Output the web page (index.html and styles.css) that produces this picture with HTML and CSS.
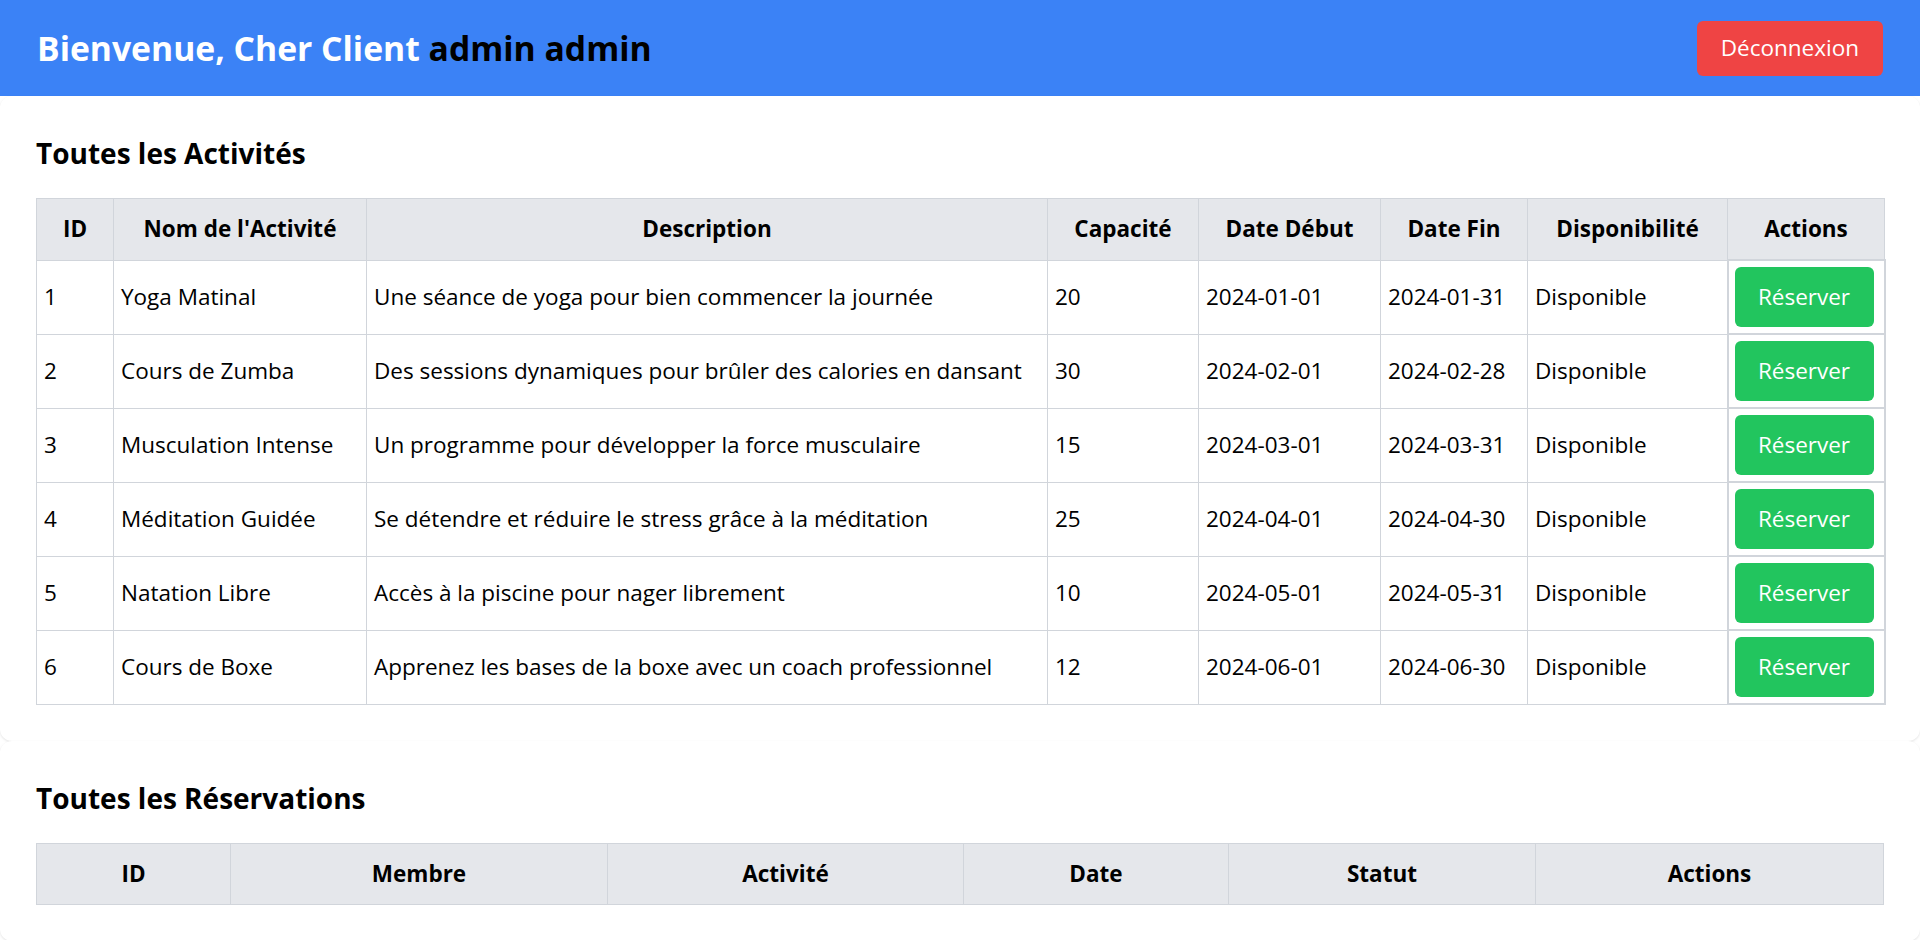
FILE: index.html
```html
<!DOCTYPE html>
<html lang="fr">
<head>
<meta charset="utf-8">
<title>Espace Client</title>
<link rel="stylesheet" href="styles.css">
</head>
<body>
<header class="topbar">
  <h1 class="welcome">Bienvenue, Cher Client <span class="user">admin admin</span></h1>
  <button class="btn btn-logout">Déconnexion</button>
</header>

<main>
  <section class="card">
    <h2 class="section-title">Toutes les Activités</h2>
    <table class="data">
      <colgroup>
        <col class="a1"><col class="a2"><col class="a3"><col class="a4"><col class="a5"><col class="a6"><col class="a7"><col class="a8">
      </colgroup>
      <thead>
        <tr>
          <th>ID</th><th>Nom de l'Activité</th><th>Description</th><th>Capacité</th><th>Date Début</th><th>Date Fin</th><th>Disponibilité</th><th>Actions</th>
        </tr>
      </thead>
      <tbody>
        <tr><td>1</td><td>Yoga Matinal</td><td>Une séance de yoga pour bien commencer la journée</td><td>20</td><td>2024-01-01</td><td>2024-01-31</td><td>Disponible</td><td class="actions"><button class="btn btn-book">Réserver</button></td></tr>
        <tr><td>2</td><td>Cours de Zumba</td><td>Des sessions dynamiques pour brûler des calories en dansant</td><td>30</td><td>2024-02-01</td><td>2024-02-28</td><td>Disponible</td><td class="actions"><button class="btn btn-book">Réserver</button></td></tr>
        <tr><td>3</td><td>Musculation Intense</td><td>Un programme pour développer la force musculaire</td><td>15</td><td>2024-03-01</td><td>2024-03-31</td><td>Disponible</td><td class="actions"><button class="btn btn-book">Réserver</button></td></tr>
        <tr><td>4</td><td>Méditation Guidée</td><td>Se détendre et réduire le stress grâce à la méditation</td><td>25</td><td>2024-04-01</td><td>2024-04-30</td><td>Disponible</td><td class="actions"><button class="btn btn-book">Réserver</button></td></tr>
        <tr><td>5</td><td>Natation Libre</td><td>Accès à la piscine pour nager librement</td><td>10</td><td>2024-05-01</td><td>2024-05-31</td><td>Disponible</td><td class="actions"><button class="btn btn-book">Réserver</button></td></tr>
        <tr><td>6</td><td>Cours de Boxe</td><td>Apprenez les bases de la boxe avec un coach professionnel</td><td>12</td><td>2024-06-01</td><td>2024-06-30</td><td>Disponible</td><td class="actions"><button class="btn btn-book">Réserver</button></td></tr>
      </tbody>
    </table>
  </section>

  <section class="card">
    <h2 class="section-title">Toutes les Réservations</h2>
    <table class="data">
      <colgroup>
        <col class="r1"><col class="r2"><col class="r3"><col class="r4"><col class="r5"><col class="r6">
      </colgroup>
      <thead>
        <tr><th>ID</th><th>Membre</th><th>Activité</th><th>Date</th><th>Statut</th><th>Actions</th></tr>
      </thead>
      <tbody></tbody>
    </table>
  </section>
</main>
</body>
</html>
```

FILE: styles.css
```css
html, body {
  margin: 0;
  padding: 0;
  background: #ffffff;
}

body {
  font-family: "Open Sans", "Noto Sans", sans-serif;
  font-size: 22.5px;
  color: #000;
}

.topbar {
  display: flex;
  align-items: center;
  justify-content: space-between;
  height: 96px;
  padding: 0 37px;
  background: #3b82f6;
  box-sizing: border-box;
}

.welcome {
  margin: 0;
  font-size: 33.7px;
  line-height: 48px;
  font-weight: 700;
  color: #ffffff;
}

.user {
  color: #000;
}

.btn {
  font-family: inherit;
  border: none;
  color: #ffffff;
  border-radius: 6px;
  cursor: pointer;
}

.btn-logout {
  background: #ef4444;
  height: 55px;
  padding: 0 24px;
  font-size: 22.5px;
  line-height: 36px;
}

.card {
  background: #ffffff;
  border-radius: 12px;
  box-shadow: 0 1px 3px rgba(0, 0, 0, 0.08), 0 1px 2px rgba(0, 0, 0, 0.04);
  padding: 36px 37px 36px 36px;
}

.section-title {
  margin: 0 0 24px;
  font-size: 28px;
  line-height: 42px;
  font-weight: 700;
}

.data {
  width: 100%;
  border-collapse: collapse;
  table-layout: fixed;
}

.data th {
  background: #e5e7eb;
  border: 1px solid #d1d5db;
  padding: 12px 8px;
  line-height: 36px;
  font-weight: 700;
  text-align: center;
  white-space: nowrap;
}

.data td {
  border: 1px solid #d1d5db;
  padding: 7px 7px;
  line-height: 36px;
  text-align: left;
  white-space: nowrap;
}

.data td.actions {
  border-width: 2px;
  padding: 6px 10px 6px 6px;
}

.btn-book {
  display: block;
  width: 100%;
  height: 60px;
  background: #22c55e;
  font-size: 22.5px;
  line-height: 36px;
  padding: 0 12px;
}

.a1 { width: 77px; }
.a2 { width: 253px; }
.a3 { width: 681px; }
.a4 { width: 151px; }
.a5 { width: 182px; }
.a6 { width: 147px; }
.a7 { width: 200px; }
.a8 { width: 157px; }

.r1 { width: 194px; }
.r2 { width: 377px; }
.r3 { width: 356px; }
.r4 { width: 265px; }
.r5 { width: 307px; }
.r6 { width: 348px; }
```
